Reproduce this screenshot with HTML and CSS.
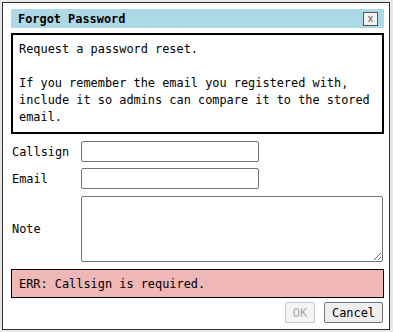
FILE: index.html
```html
<!DOCTYPE html>
<html lang="en">
<head>
  <meta charset="UTF-8">
  <meta name="viewport" content="width=device-width, initial-scale=1.0">
  <title>Forgot Password</title>
  <link rel="stylesheet" href="styles.css">
</head>
<body>

<div class="dialog">
  <div class="title-bar">
    <span class="title">Forgot Password</span>
    <button class="close-btn">x</button>
  </div>

  <div class="message">
    <p>Request a password reset.</p>
    <p>If you remember the email you registered with, include it so admins can compare it to the stored email.</p>
  </div>

  <div class="form">
    <label for="callsign">Callsign</label>
    <input type="text" id="callsign" class="field-short">
    <label for="email">Email</label>
    <input type="text" id="email" class="field-short">
    <label for="note">Note</label>
    <textarea id="note"></textarea>
  </div>

  <div class="error">ERR: Callsign is required.</div>

  <div class="buttons">
    <button class="btn" disabled>OK</button>
    <button class="btn">Cancel</button>
  </div>
</div>

</body>
</html>
```

FILE: styles.css
```css
/* General */
body {
  margin: 0;
  padding: 0;
  background: #e8e8e8;
  font-family: 'DejaVu Sans Mono', 'Liberation Mono', monospace;
  font-size: 11.9px;
  color: #000;
}

/* Dialog window */
.dialog {
  box-sizing: border-box;
  width: 388px;
  height: 328px;
  margin: 2px 0 0 2px;
  padding: 6px 5px 6px 8px;
  background: #fff;
  border: 1px solid #333;
  display: flex;
  flex-direction: column;
}

.title-bar {
  height: 19px;
  background: #add8e6;
  display: flex;
  align-items: center;
  justify-content: space-between;
  padding: 0 6px 0 7px;
}

.title {
  font-weight: bold;
}

.close-btn {
  box-sizing: border-box;
  width: 15px;
  height: 14px;
  padding: 0;
  margin: 0;
  border: 1px solid #555;
  background: #f2f2f2;
  color: #555;
  font-family: inherit;
  font-size: 10px;
  line-height: 10px;
}

/* Info box */
.message {
  margin-top: 5px;
  border: 2px solid #000;
  padding: 6px 6px;
  line-height: 17px;
}

.message p {
  margin: 0;
}

.message p + p {
  margin-top: 17px;
}

/* Form fields */
.form {
  margin-top: 7px;
  display: grid;
  grid-template-columns: 70px 1fr;
  row-gap: 6px;
  align-items: center;
}

.form label {
  padding-left: 1px;
}

.form input,
.form textarea {
  box-sizing: border-box;
  margin: 0;
  border: 1px solid #767676;
  border-radius: 2px;
  font: inherit;
  padding: 1px 2px;
}

.field-short {
  width: 178px;
  height: 21px;
}

.form textarea {
  width: 302px;
  height: 66px;
  margin-top: 1px;
}

/* Error line */
.error {
  margin-top: 7px;
  height: 29px;
  box-sizing: border-box;
  border: 1px solid #000;
  background: #f0b7b7;
  padding: 0 7px;
  display: flex;
  align-items: center;
}

/* Buttons */
.buttons {
  margin-top: auto;
  display: flex;
  justify-content: flex-end;
  gap: 9px;
  padding-right: 1px;
}

.btn {
  box-sizing: border-box;
  height: 21px;
  padding: 0 7px;
  border: 1px solid #767676;
  border-radius: 2px;
  background: #efefef;
  color: #000;
  font: inherit;
}

.btn:disabled {
  border-color: #c8c8c8;
  background: #f4f4f4;
  color: #aaa;
}
```
